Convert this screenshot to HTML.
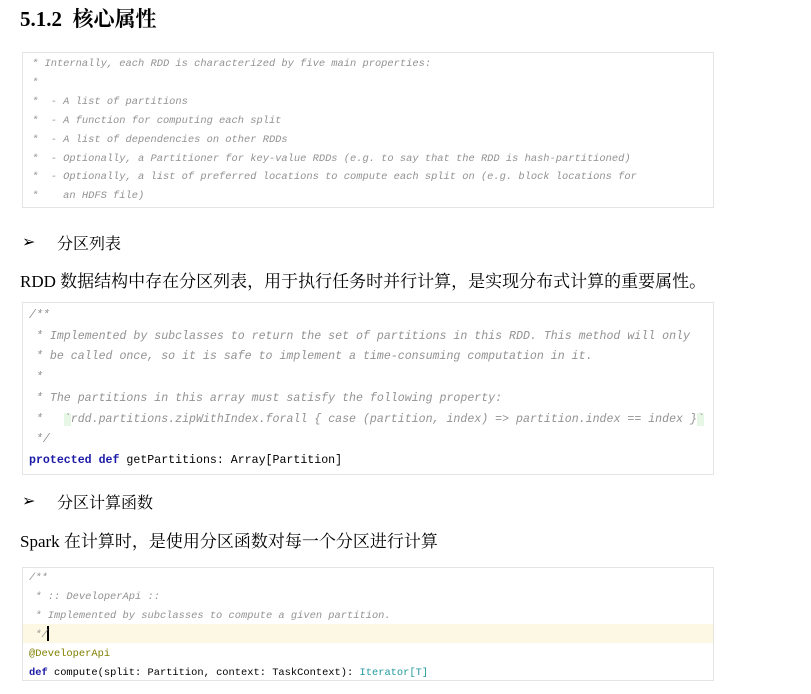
<!DOCTYPE html>
<html><head><meta charset="utf-8"><style>
body{margin:0;background:#fff;width:811px;height:694px;position:relative;overflow:hidden;font-family:"Liberation Serif","Noto Serif CJK SC",serif;color:#000}
.a{position:absolute;white-space:pre}
.h{left:20px;top:3px;font-size:21px;font-weight:bold}
.sub{font-size:16px}
.p{font-size:17px;left:20px}
.box{position:absolute;left:22px;width:690px;border:1px solid #e4e4e4;background:#fff}
.code{position:absolute;left:0;font-family:"Liberation Mono",monospace;white-space:pre;color:#929292;font-style:italic}
.k{color:#1a1aa6;font-weight:bold;font-style:normal}
.n{color:#000;font-style:normal}
</style></head><body>
<div class="a h">5.1.2&nbsp; 核心属性</div>

<div class="box" style="top:52px;height:154px">
<div class="code" style="left:9px;top:2px;font-size:10.4px;line-height:18.9px">* Internally, each RDD is characterized by five main properties:
*
*  - A list of partitions
*  - A function for computing each split
*  - A list of dependencies on other RDDs
*  - Optionally, a Partitioner for key-value RDDs (e.g. to say that the RDD is hash-partitioned)
*  - Optionally, a list of preferred locations to compute each split on (e.g. block locations for
*    an HDFS file)</div>
</div>

<div class="a sub" style="left:22px;top:232px">➢</div>
<div class="a sub" style="left:57px;top:231px">分区列表</div>
<div class="a p" style="top:267px">RDD 数据结构中存在分区列表，用于执行任务时并行计算，是实现分布式计算的重要属性。</div>

<div class="box" style="top:302px;height:171px">
<div class="code" style="left:6px;top:3px;font-size:11.6px;line-height:20.7px">/**
 * Implemented by subclasses to return the set of partitions in this RDD. This method will only
 * be called once, so it is safe to implement a time-consuming computation in it.
 *
 * The partitions in this array must satisfy the following property:
 *   <span style="background:#e6f7e6">`</span>rdd.partitions.zipWithIndex.forall { case (partition, index) =&gt; partition.index == index }<span style="background:#e6f7e6">`</span>
 */
<span class="k">protected def</span><span class="n"> getPartitions: Array[Partition]</span></div>
</div>

<div class="a sub" style="left:22px;top:491px">➢</div>
<div class="a sub" style="left:57px;top:490px">分区计算函数</div>
<div class="a p" style="top:527px">Spark 在计算时，是使用分区函数对每一个分区进行计算</div>

<div class="box" style="top:567px;height:112px">
<div style="position:absolute;left:0;right:0;top:56px;height:19px;background:#fdf8e4"></div>
<div style="position:absolute;left:24px;top:58px;width:2px;height:15px;background:#000"></div>
<div class="code" style="left:6px;top:1px;font-size:10.4px;line-height:19px">/**
 * :: DeveloperApi ::
 * Implemented by subclasses to compute a given partition.
 */
<span style="color:#808000;font-style:normal">@DeveloperApi</span>
<span class="k">def</span><span class="n"> compute(split: Partition, context: TaskContext): <span style="color:#20999d">Iterator[T]</span></span></div>
</div>
</body></html>
